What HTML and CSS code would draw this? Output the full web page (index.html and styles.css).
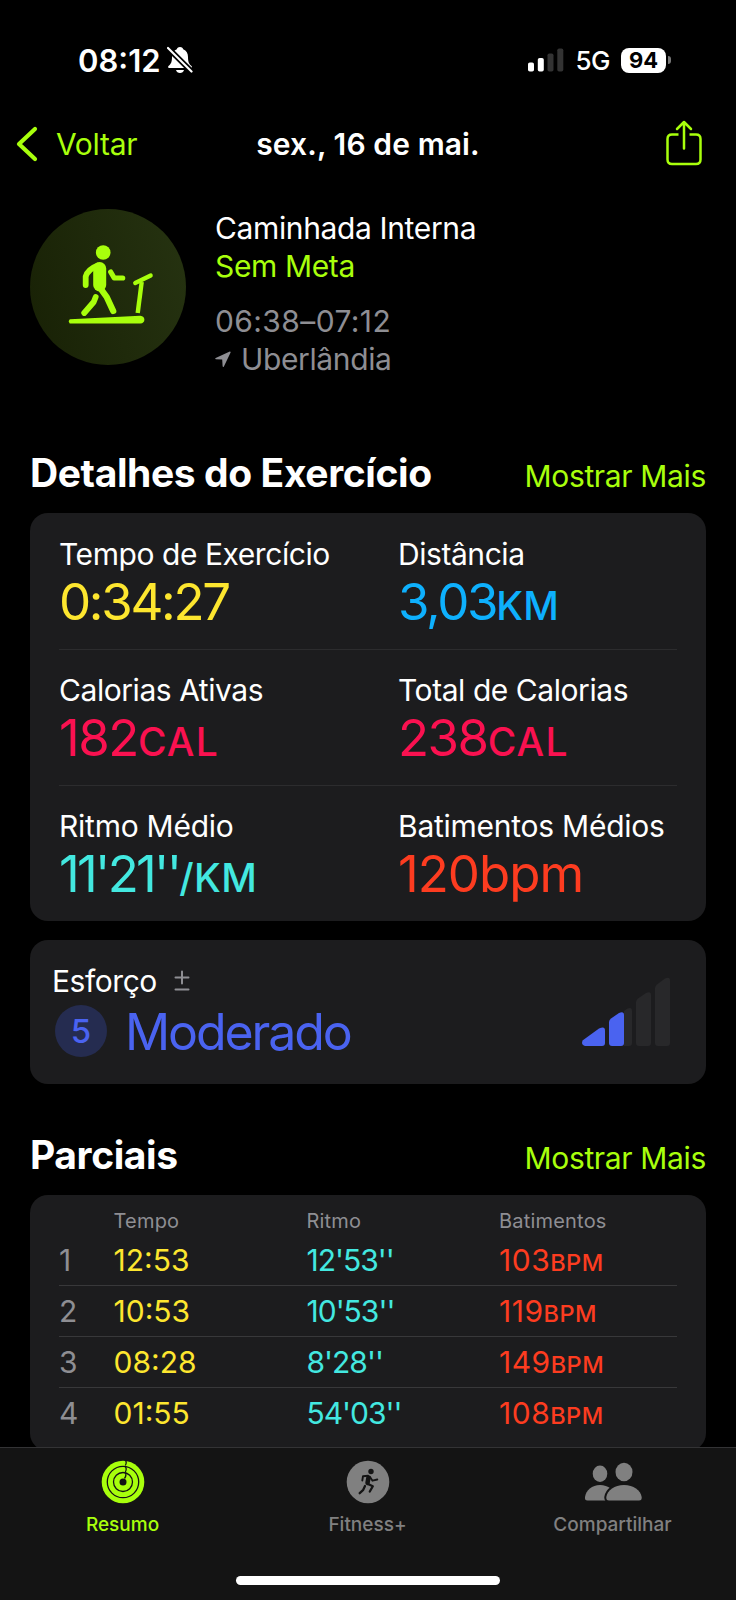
FILE: index.html
```html
<!DOCTYPE html>
<html lang="pt-BR">
<head>
  <meta charset="UTF-8">
  <title>Caminhada Interna</title>
  <link rel="stylesheet" href="styles.css">
</head>
<body>
<div class="screen">
  <div class="content">

    <div class="status">
      <span class="clock">08:12</span>
      <svg class="bell" width="26" height="28" viewBox="0 0 26 28">
        <path d="M13 1c-2 0-3 1-3.200 2.300C6.500 4.500 5 7.500 5 11c0 5-1 7-3.500 9-.8.800-.5 2 .7 2h21.600c1.200 0 1.500-1.200.7-2C22 18 21 16 21 11c0-3.500-1.500-6.500-4.800-7.700C16 2 15 1 13 1z" fill="#fff"/>
        <path d="M9 24h8c-.5 2-2 3-4 3s-3.500-1-4-3z" fill="#fff"/>
        <path d="M0 1l26 26" stroke="#000" stroke-width="5.500"/>
        <path d="M1 2l23.500 23.500" stroke="#fff" stroke-width="2.200" stroke-linecap="round"/>
      </svg>
      <svg class="signal" width="36" height="24" viewBox="0 0 36 24">
        <rect x="0" y="14.500" width="6" height="9" rx="1.800" fill="#fff"/>
        <rect x="9.800" y="10" width="6" height="13.500" rx="1.800" fill="#fff"/>
        <rect x="19.500" y="5.500" width="6" height="18" rx="1.800" fill="#333"/>
        <rect x="29.300" y="0.500" width="6" height="23" rx="1.800" fill="#333"/>
      </svg>
      <span class="network">5G</span>
      <span class="battery">94</span>
      <span class="battery-tip"></span>
    </div>

    <div class="nav">
      <a class="back">
        <svg width="22" height="36" viewBox="0 0 22 36"><path d="M19 3L3 18l16 15" fill="none" stroke="#a8ff0c" stroke-width="4.200" stroke-linecap="round" stroke-linejoin="round"/></svg>
        <span>Voltar</span>
      </a>
      <span class="nav-title">sex., 16 de mai.</span>
      <svg class="share" width="36" height="46" viewBox="0 0 36 46" fill="none" stroke="#a8ff0c" stroke-width="2.500" stroke-linecap="round" stroke-linejoin="round">
        <path d="M12.500 14.500H6q-4.500 0-4.500 4.500v20.500Q1.500 44 6 44h24q4.500 0 4.500-4.500V19q0-4.500-4.500-4.500h-6.500" stroke-linecap="butt"/>
        <path d="M18 28.500V2.500M11 9l7-7 7 7"/>
      </svg>
    </div>

    <div class="hero">
      <div class="workout-icon">
        <svg width="156" height="156" viewBox="1.300 0 156 156" fill="none" stroke="#a8ff0c" stroke-linecap="round" stroke-linejoin="round">
          <circle cx="74.500" cy="43.500" r="7.300" fill="#a8ff0c" stroke="none"/>
          <path d="M71 59.500V76" stroke-width="13"/>
          <path d="M69 56.500q-10 4-12 11L57 76" stroke-width="5.800"/>
          <path d="M70 77l8 11 6.500 14" stroke-width="6.300"/>
          <path d="M67 88l-2 5-9.500 11" stroke-width="5.800"/>
          <path d="M82 63l3.500 6h8.500" stroke-width="5.200"/>
          <path d="M106.500 74l15.500-7.500" stroke-width="4.200"/>
          <path d="M113 73l-4 31" stroke-width="4.400" stroke-linecap="butt"/>
          <path d="M41.500 111.200l70-3.500q3.300.5 3.300 3t-3.300 3h-70q-1.200-1.300 0-2.500z" fill="#a8ff0c" stroke-width="1.800"/>
        </svg>
      </div>
      <div class="workout-info">
        <div class="name">Caminhada Interna</div>
        <div class="goal">Sem Meta</div>
        <div class="hours">06:38–07:12</div>
        <div class="place">
          <svg width="16" height="17" viewBox="0 0 16 17"><path d="M14.800.6L.7 7q-1 .8.200 1.200l6.300.4.400 6.600q.5 1.300 1.300.2L15.600 1.500q.1-1-.8-.9z" fill="#8e8e93"/></svg>
          <span>Uberlândia</span>
        </div>
      </div>
    </div>

    <div class="section-head">
      <h2>Detalhes do Exercício</h2>
      <a class="more">Mostrar Mais</a>
    </div>
    <div class="card details">
      <div class="row">
        <div class="metric"><div class="label">Tempo de Exercício</div><div class="value time yellow">0:34:27</div></div>
        <div class="metric"><div class="label">Distância</div><div class="value distance blue">3,03<small>KM</small></div></div>
      </div>
      <div class="row">
        <div class="metric"><div class="label">Calorias Ativas</div><div class="value pink">182<small>CAL</small></div></div>
        <div class="metric"><div class="label">Total de Calorias</div><div class="value pink">238<small>CAL</small></div></div>
      </div>
      <div class="row averages">
        <div class="metric"><div class="label">Ritmo Médio</div><div class="value pace cyan">11'21''<small>/KM</small></div></div>
        <div class="metric"><div class="label">Batimentos Médios</div><div class="value heart red">120bpm</div></div>
      </div>
    </div>

    <div class="card effort">
      <div>
        <div class="label effort-label">Esforço
          <svg width="16" height="22" viewBox="0 0 16 22" stroke="#8e8e93" stroke-width="2" stroke-linecap="round"><path d="M8 1.500v12M1.500 7.500h13M1.500 19.500h13"/></svg>
        </div>
        <div class="effort-value">
          <span class="score">5</span>
          <span class="level">Moderado</span>
        </div>
      </div>
      <svg class="effort-bars" width="90" height="70" viewBox="0 0 90 70">
        <path d="M43 34l3-2.200q5-2.300 5 2.200v32q0 3-3 3h-5z" fill="#28282a"/>
        <path d="M55 25q0-2 2-3.500l8-5.500q5-2 5 2v48q0 3-3 3h-9q-3 0-3-3z" fill="#28282a"/>
        <path d="M74 11q0-2 2-3.500l8-6q5-2 5 2v62.500q0 3-3 3h-9q-3 0-3-3z" fill="#28282a"/>
        <path d="M1.500 63.500L18 51.500q6-3 6 2V66q0 3-3 3H4q-4-1-2.500-5.500z" fill="#4a63f0"/>
        <path d="M28 45q0-2 2-3.500l8-5.500q5-2 5 2v28q0 3-3 3h-9q-3 0-3-3z" fill="#4a63f0"/>
      </svg>
    </div>

    <div class="section-head second">
      <h2>Parciais</h2>
      <a class="more">Mostrar Mais</a>
    </div>
    <div class="card splits">
      <div class="split split-head"><span></span><span>Tempo</span><span>Ritmo</span><span>Batimentos</span></div>
      <div class="split"><span class="num">1</span><span class="yellow">12:53</span><span class="split-pace cyan">12'53''</span><span class="bpm red">103<small>BPM</small></span></div>
      <div class="split"><span class="num">2</span><span class="yellow">10:53</span><span class="split-pace cyan">10'53''</span><span class="bpm red">119<small>BPM</small></span></div>
      <div class="split"><span class="num">3</span><span class="yellow">08:28</span><span class="split-pace cyan">8'28''</span><span class="bpm red">149<small>BPM</small></span></div>
      <div class="split"><span class="num">4</span><span class="yellow">01:55</span><span class="split-pace cyan">54'03''</span><span class="bpm red">108<small>BPM</small></span></div>
    </div>
  </div>

  <div class="tabbar">
    <div class="tabs">
      <div class="tab active">
        <svg width="44" height="44" viewBox="0 0 44 44" fill="none">
          <circle cx="22" cy="22" r="21.300" fill="#a8ff0c"/>
          <g stroke="#141414" stroke-width="1.300">
            <circle cx="22" cy="22" r="15.700"/>
            <circle cx="22" cy="22" r="9.500"/>
            <path d="M24.300 0q1.800 2.500 0 5.500M24.300 6.500q1.800 2.500 0 5.500M24.300 12.500q1.500 3-.8 6"/>
          </g>
          <circle cx="22" cy="22" r="3.500" fill="#141414"/>
        </svg>
        <span>Resumo</span>
      </div>
      <div class="tab">
        <svg width="44" height="44" viewBox="0 0 44 44" fill="none" stroke="#141414" stroke-linecap="round" stroke-linejoin="round">
          <circle cx="22" cy="22" r="21.300" fill="#808080" stroke="none"/>
          <circle cx="25" cy="11.500" r="2.700" fill="#141414" stroke="none"/>
          <path d="M22.500 17.500l-1 5.500" stroke-width="4.500"/>
          <path d="M22 15.800l-5 .4-.7 4.300M24 17l2.500 3.700 4.800-1.200" stroke-width="1.900"/>
          <path d="M22 24l4.800 2.300-3 5.200M19 26l-2 4.200-3.300 3" stroke-width="2.300"/>
        </svg>
        <span>Fitness+</span>
      </div>
      <div class="tab">
        <svg width="58" height="44" viewBox="0 0 58 44" fill="#808080">
          <ellipse cx="16" cy="13.700" rx="7.300" ry="8.200"/>
          <path d="M3.500 40.500q-3 0-2.500-3.500C2 30 8 25 16 25s15 5 16 12q0 3.500-3 3.500z"/>
          <path d="M25 40.500q-3 0-2.700-3.500C23.500 30 30.500 25 40 25s16.500 5 17.700 12q.3 3.500-2.700 3.500z" stroke="#141414" stroke-width="4" paint-order="stroke"/>
          <ellipse cx="40" cy="12" rx="8.500" ry="9.300"/>
        </svg>
        <span>Compartilhar</span>
      </div>
    </div>
    <div class="home"></div>
  </div>
</div>
</body>
</html>
```
FILE: styles.css
```css
* { box-sizing: border-box; }
body {
  margin: 0;
  background: #000;
  color: #fff;
  font-family: Inter, "Liberation Sans", sans-serif;
  font-size: 30px;
}
.screen {
  width: 736px;
  height: 1600px;
  display: flex;
  flex-direction: column;
  overflow: hidden;
}
.content {
  height: 1447px;
  overflow: hidden;
}

/* status bar */
.status {
  height: 100px;
  padding: 20px 65px 0 78px;
  display: flex;
  align-items: center;
}
.clock { font-size: 31px; font-weight: 600; }
.bell { margin-left: 6px; }
.signal { margin-left: auto; }
.network {
  margin-left: 11px;
  font-size: 26px;
  font-weight: 500;
  letter-spacing: -0.5px;
}
.battery {
  margin-left: 11px;
  width: 45px;
  height: 25px;
  line-height: 25px;
  border-radius: 8px;
  background: #fff;
  color: #000;
  font-size: 22px;
  font-weight: 700;
  text-align: center;
}
.battery-tip {
  width: 3px;
  height: 8px;
  margin-left: 2px;
  border-radius: 0 4px 4px 0;
  background: #777;
}

/* navigation */
.nav {
  height: 88px;
  padding: 0 34px;
  display: grid;
  grid-template-columns: 1fr auto 1fr;
  align-items: center;
}
.back {
  margin-left: -18px;
  display: flex;
  align-items: center;
  gap: 18px;
  color: #a8ff0c;
  letter-spacing: -0.3px;
}
.nav-title { font-weight: 600; letter-spacing: 0.1px; }
.share { justify-self: end; margin-bottom: 2px; }

/* workout summary */
.hero {
  height: 260px;
  padding: 21px 30px 0;
  display: flex;
  gap: 29px;
}
.workout-icon {
  width: 156px;
  height: 156px;
  border-radius: 50%;
  background: linear-gradient(75deg, #182105, #263311);
}
.workout-info {
  line-height: 37.4px;
  padding-top: 1.4px;
  letter-spacing: -0.37px;
}
.goal { color: #a8ff0c; }
.hours {
  margin-top: 18px;
  color: #8e8e93;
  letter-spacing: 0.4px;
}
.place {
  display: flex;
  align-items: center;
  gap: 10px;
  color: #8e8e93;
}

.section-head {
  height: 65px;
  padding: 1px 30px 0;
  display: flex;
  justify-content: space-between;
  align-items: baseline;
}
.section-head h2 {
  margin: 0;
  font-size: 39px;
  line-height: 48px;
  font-weight: 700;
  letter-spacing: -0.4px;
}
.second { margin-top: 46px; }
.more { color: #a8ff0c; letter-spacing: -0.35px; }

.card {
  margin: 0 30px;
  border-radius: 18px;
  background: #1c1c1e;
}
.details { padding: 0 29px; }
.row {
  height: 136px;
  padding-top: 22px;
  display: grid;
  grid-template-columns: 339px 1fr;
}
.row + .row {
  padding-top: 21px;
  border-top: 1px solid #2c2c2e;
}
.label {
  line-height: 38px;
  letter-spacing: -0.44px;
  white-space: nowrap;
}
.averages .label { letter-spacing: -0.25px; }
.value {
  font-size: 51px;
  line-height: 57px;
  letter-spacing: -1.5px;
  white-space: nowrap;
}
.value small { font-size: 39px; font-weight: 500; letter-spacing: 1.2px; }
.time { letter-spacing: -2.3px; }
.distance { letter-spacing: -2.3px; }
.pace { letter-spacing: -2.7px; }
.distance small, .pace small { letter-spacing: 0.3px; }
.heart { letter-spacing: -1px; }

.yellow { color: #fde62f; }
.blue { color: #0eb0fd; }
.pink { color: #fa1150; }
.cyan { color: #43e8e0; }
.red { color: #fd3c20; }

/* effort */
.effort {
  height: 144px;
  margin-top: 19px;
  padding: 22px 35px 0 22px;
  display: flex;
  justify-content: space-between;
}
.effort-label svg { margin-left: 9px; }
.effort-value {
  margin-top: 5px;
  height: 52px;
  padding-left: 3px;
  display: flex;
  align-items: center;
  gap: 18px;
  color: #4a63f0;
}
.score {
  width: 52px;
  height: 52px;
  line-height: 52px;
  border-radius: 50%;
  background: #252c50;
  font-size: 33px;
  font-weight: 500;
  text-align: center;
}
.level { padding-top: 2px; font-size: 50px; line-height: 54px; letter-spacing: -2.1px; }
.effort-bars { margin-top: 15px; }

/* splits */
.splits {
  height: 256px;
  padding: 0 29px;
}
.split {
  height: 51px;
  line-height: 51px;
  display: grid;
  grid-template-columns: 54.5px 193px 192.5px 1fr;
}
.split small { font-size: 23.5px; font-weight: 500; }
.split + .split { border-top: 1px solid #1c1c1e; }
.split + .split + .split { border-top-color: #38383a; }
.split-head {
  height: 39px;
  padding-top: 14px;
  line-height: 24px;
  font-size: 20px;
  letter-spacing: 0.2px;
  color: #8e8e93;
}
.num { color: #8e8e93; }
.split-pace { letter-spacing: -1px; }
.bpm { letter-spacing: 0.5px; }

/* tab bar */
.tabbar {
  height: 153px;
  border-top: 1px solid #333335;
  background: #141414;
}
.tabs { display: flex; padding: 12px 1px 0 0; }
.tab {
  flex: 1;
  display: flex;
  flex-direction: column;
  align-items: center;
  gap: 9px;
  color: #808080;
  font-size: 19px;
  line-height: 24px;
  font-weight: 500;
}
.active { color: #a8ff0c; }
.home {
  width: 264px;
  height: 9px;
  margin: 39px auto 0;
  border-radius: 5px;
  background: #fff;
}
```
